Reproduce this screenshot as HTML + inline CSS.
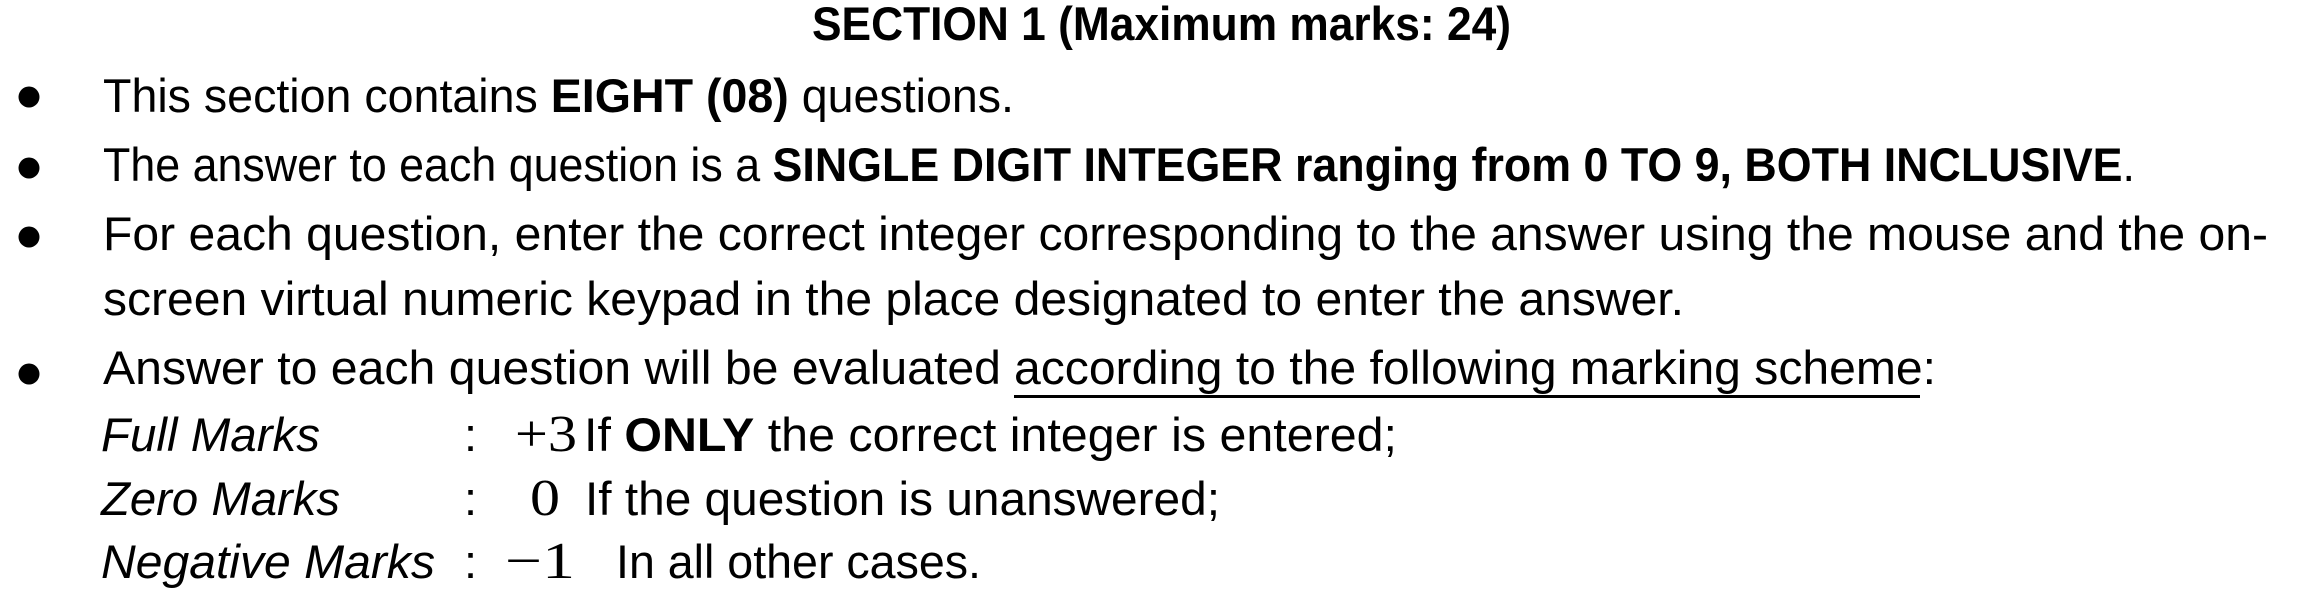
<!DOCTYPE html>
<html><head><meta charset="utf-8"><style>
html,body{margin:0;padding:0;background:#fff;}
svg{display:block;}
text{font-family:"Liberation Sans",sans-serif;font-size:47px;fill:#000;}
.b{font-weight:bold;}
.i{font-style:italic;}
.m{font-family:"Liberation Serif",serif;font-size:52px;}
</style></head><body>
<svg width="2320" height="592" viewBox="0 0 2320 592" xmlns="http://www.w3.org/2000/svg">
<text class="b" x="812" y="40" textLength="699" lengthAdjust="spacingAndGlyphs">SECTION 1 (Maximum marks: 24)</text>
<circle cx="29" cy="97" r="10.5"/>
<circle cx="29" cy="168" r="10.5"/>
<circle cx="29" cy="237" r="10.5"/>
<circle cx="29" cy="374" r="10.5"/>
<text x="103" y="112" textLength="911" lengthAdjust="spacingAndGlyphs">This section contains <tspan class="b">EIGHT (08)</tspan> questions.</text>
<text x="103" y="181" textLength="2032" lengthAdjust="spacingAndGlyphs">The answer to each question is a <tspan class="b">SINGLE DIGIT INTEGER ranging from 0 TO 9, BOTH INCLUSIVE</tspan>.</text>
<text x="103" y="250" textLength="2165" lengthAdjust="spacingAndGlyphs">For each question, enter the correct integer corresponding to the answer using the mouse and the on-</text>
<text x="103" y="315" textLength="1581" lengthAdjust="spacingAndGlyphs">screen virtual numeric keypad in the place designated to enter the answer.</text>
<text x="103" y="384" textLength="898" lengthAdjust="spacingAndGlyphs">Answer to each question will be evaluated</text>
<text x="1014" y="384" textLength="922" lengthAdjust="spacingAndGlyphs">according to the following marking scheme:</text>
<rect x="1014" y="395" width="906" height="3"/>
<text class="i" x="101" y="451" textLength="219" lengthAdjust="spacingAndGlyphs">Full Marks</text>
<text x="464" y="451">:</text>
<text class="m" x="515" y="451" textLength="62" lengthAdjust="spacingAndGlyphs">+3</text>
<text x="584" y="451" textLength="813" lengthAdjust="spacingAndGlyphs">If <tspan class="b">ONLY</tspan> the correct integer is entered;</text>
<text class="i" x="101" y="515" textLength="239" lengthAdjust="spacingAndGlyphs">Zero Marks</text>
<text x="464" y="515">:</text>
<text class="m" x="530" y="515" textLength="30" lengthAdjust="spacingAndGlyphs">0</text>
<text x="585" y="515" textLength="635" lengthAdjust="spacingAndGlyphs">If the question is unanswered;</text>
<text class="i" x="101" y="578" textLength="334" lengthAdjust="spacingAndGlyphs">Negative Marks</text>
<text x="464" y="578">:</text>
<text class="m" x="505" y="578" textLength="70" lengthAdjust="spacingAndGlyphs">−1</text>
<text x="616" y="578" textLength="365" lengthAdjust="spacingAndGlyphs">In all other cases.</text>
</svg>
</body></html>
